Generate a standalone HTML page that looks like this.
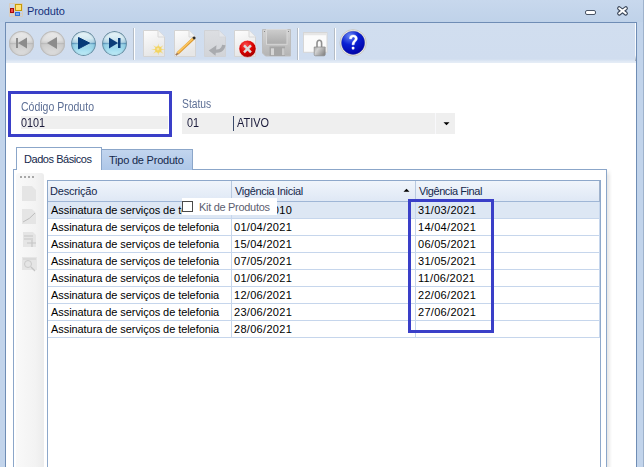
<!DOCTYPE html>
<html><head><meta charset="utf-8">
<style>
*{margin:0;padding:0;box-sizing:border-box}
html,body{width:644px;height:467px;overflow:hidden}
body{position:relative;background:#c2d4eb;font-family:"Liberation Sans",sans-serif;font-size:11px;line-height:13px;color:#000}
.a{position:absolute}
.t{position:absolute;white-space:nowrap;font-size:11px;line-height:15px}
#title{left:0;top:0;width:644px;height:22px;background:linear-gradient(#c8d8ed,#bfd2e9)}
#frame{left:5px;top:22px;width:632px;height:460px;border:1px solid #6f8db5;border-bottom:none;background:#fff}
#tb{left:6px;top:23px;width:630px;height:40px;background:linear-gradient(#d1deef 0,#d0ddef 36px,#e4ecf6 39px)}
.nav{position:absolute;top:31px;width:25px;height:25px;border-radius:50%}
.gray{background:linear-gradient(#eeeeee 0%,#dedede 38%,#cfcfcf 47%,#bdbdbd 50%,#cdcdcd 55%,#d8d8d8 80%,#e2e2e2 100%);box-shadow:inset 0 0 0 1px #bcbcbc,inset 0 0 3px 1px rgba(150,150,150,.35)}
.blue{background:radial-gradient(ellipse 55% 22% at 50% 50%,rgba(230,245,250,.55),rgba(230,245,250,0)),linear-gradient(#edf7fa 0%,#d4eaf2 30%,#a6cde0 45%,#4a8db5 50%,#86c9e2 55%,#a6def0 75%,#c4eff9 100%);box-shadow:inset 0 0 0 1px #6b8ea3,inset 0 0 2px 1px rgba(60,110,140,.35)}
.sep{position:absolute;top:28px;width:2px;height:32px;background:linear-gradient(90deg,#b4bcc6 50%,#fff 50%)}
.lbl{color:#5d6f95}
.box{position:absolute;border:3px solid #3a3fc8}
.gl{position:absolute;background:#c6d6ec}
</style></head><body>
<div id="title" class="a"></div>
<!-- title icon -->
<svg class="a" style="left:9px;top:3px" width="14" height="14" viewBox="0 0 14 14">
<path d="M0.5 0.5 H13.5 V13.5 H0.5Z M0.5 5.5 H5.5 M5.5 0.5 V13.5 M0.5 10.5 H13.5 M3 10.5 V13.5 M11 10.5 V13.5" fill="none" stroke="#d9cdbd" stroke-width="1"/>
<rect x="6" y="1" width="7" height="7" fill="#c49a08"/><rect x="7" y="2" width="5" height="5" fill="#ffe27a"/>
<rect x="1" y="5" width="4" height="5" fill="#a80c0c"/><rect x="2" y="6" width="2" height="3" fill="#f04848"/>
<rect x="6" y="9" width="5" height="4" fill="#2f6fd8"/><rect x="7" y="10" width="3" height="2" fill="#78aaf0"/>
</svg>
<div class="t" style="left:27px;top:4px;color:#15307a;letter-spacing:-0.1px">Produto</div>
<!-- min / close -->
<div class="a" style="left:585px;top:10px;width:11px;height:5px;border:1px solid #4a5566;border-radius:2px;background:#fff"></div>
<svg class="a" style="left:615px;top:4px" width="15" height="13" viewBox="0 0 15 13">
<path d="M4.2 4.3 L10.8 9.5 M10.8 4.3 L4.2 9.5" stroke="#3e4a5c" stroke-width="4.2" stroke-linecap="round"/>
<path d="M4.2 4.3 L10.8 9.5 M10.8 4.3 L4.2 9.5" stroke="#fff" stroke-width="2" stroke-linecap="round"/>
</svg>
<div id="frame" class="a"></div>
<div id="tb" class="a"></div>
<div class="a" style="left:635px;top:23px;width:1px;height:38px;background:linear-gradient(#fff 0,#f4f7fb 85%,#a0a8b4 100%)"></div>
<div class="a" style="left:643px;top:0;width:1px;height:467px;background:#9eb2cc"></div>
<!-- nav buttons -->
<div class="nav gray" style="left:9px"></div>
<div class="nav gray" style="left:40px"></div>
<div class="nav blue" style="left:71px"></div>
<div class="nav blue" style="left:102px"></div>
<svg class="a" style="left:10px;top:31px" width="24" height="24"><rect x="6" y="7" width="2" height="10" fill="#8c8c8c"/><path d="M8 12 L17 6.5 L17 17.5Z" fill="#8c8c8c"/></svg>
<svg class="a" style="left:41px;top:31px" width="24" height="24"><path d="M6 12 L16 6 L16 18Z" fill="#8c8c8c"/></svg>
<svg class="a" style="left:72px;top:31px" width="24" height="24"><path d="M6.5 6.5 L17.5 12 L6.5 17.8Z" fill="#063a78" stroke="#063a78" stroke-width="1" stroke-linejoin="round"/></svg>
<svg class="a" style="left:103px;top:31px" width="24" height="24"><path d="M6 6.5 L15 12 L6 17.5Z" fill="#0b3d78"/><rect x="15" y="7" width="2.5" height="10" fill="#0b3d78"/></svg>
<div class="sep" style="left:133px"></div>
<div class="sep" style="left:297px"></div>
<div class="sep" style="left:334px"></div>
<!-- toolbar icons -->
<svg class="a" style="left:140px;top:27px" width="240" height="32" viewBox="140 27 240 32">
<defs>
<linearGradient id="pg" x1="0" y1="0" x2="0.3" y2="1"><stop offset="0" stop-color="#fdfdfd"/><stop offset="1" stop-color="#e6e6e6"/></linearGradient>
<linearGradient id="pgd" x1="0" y1="0" x2="0" y2="1"><stop offset="0" stop-color="#dcdee2"/><stop offset="1" stop-color="#d2d4d8"/></linearGradient>
<radialGradient id="redg" cx="0.4" cy="0.3" r="0.7"><stop offset="0" stop-color="#ff5050"/><stop offset="0.6" stop-color="#d80000"/><stop offset="1" stop-color="#a00000"/></radialGradient>
<radialGradient id="blug" cx="0.35" cy="0.2" r="0.85"><stop offset="0" stop-color="#6a88f4"/><stop offset="0.45" stop-color="#0a20d4"/><stop offset="1" stop-color="#0000a4"/></radialGradient>
<linearGradient id="flop" x1="0" y1="0" x2="0" y2="1"><stop offset="0" stop-color="#bdbdbd"/><stop offset="1" stop-color="#9c9c9c"/></linearGradient>
<linearGradient id="lockg" x1="0" y1="0" x2="1" y2="0.6"><stop offset="0" stop-color="#a8a8a8"/><stop offset="0.35" stop-color="#d2d2d2"/><stop offset="1" stop-color="#8c8c8c"/></linearGradient>
</defs>
<!-- new -->
<path d="M143.5 30.5 H158 L164.5 37 V56.5 H143.5Z" fill="url(#pg)" stroke="#d4d4d4"/>
<path d="M158 30.5 V37 H164.5" fill="#f2f2f2" stroke="#d8d8d8"/>
<polygon points="158.30,43.38 159.29,47.46 163.39,45.17 160.70,48.65 165.50,49.50 160.70,50.35 163.39,53.83 159.29,51.54 158.30,55.62 157.31,51.54 153.21,53.83 155.90,50.35 151.10,49.50 155.90,48.65 153.21,45.17 157.31,47.46" fill="#f4d870" opacity="0.85"/><circle cx="158.3" cy="49.5" r="3.2" fill="#f2d35c" opacity="0.9"/><circle cx="157.9" cy="49.1" r="1.4" fill="#f7e3a0"/>
<!-- edit -->
<path d="M174.5 30.5 H189 L195.5 37 V56.5 H174.5Z" fill="url(#pg)" stroke="#d4d4d4"/>
<path d="M189 30.5 V37 H195.5" fill="#f2f2f2" stroke="#d8d8d8"/>
<path d="M177.5 53.5 L193.5 38.5" stroke="#dc9a34" stroke-width="3"/>
<path d="M177.3 53.1 L193.2 38.2" stroke="#fcc660" stroke-width="1.5"/>
<path d="M193.2 38.8 L195 37.1" stroke="#2a2a2a" stroke-width="2.6"/>
<path d="M175.8 55.2 L177.8 53.3" stroke="#a0785a" stroke-width="1.8"/>
<!-- undo (disabled) -->
<path d="M204.5 30.5 H219 L225.5 37 V56.5 H204.5Z" fill="url(#pgd)" stroke="#d0d2d6"/>
<path d="M219 30.5 V37 H225.5" fill="#e4e6ea" stroke="#d6d8dc"/>
<path d="M223.8 45 C223.2 50 219 51.8 214.5 50.8" fill="none" stroke="#a9abaf" stroke-width="3.4"/><path d="M216.5 45.2 L208.8 50.6 L215.5 55.8Z" fill="#a9abaf"/>
<!-- delete -->
<path d="M234.5 30.5 H249 L255.5 37 V56.5 H234.5Z" fill="url(#pg)" stroke="#d4d4d4"/>
<path d="M249 30.5 V37 H255.5" fill="#f2f2f2" stroke="#d8d8d8"/>
<circle cx="247.5" cy="48.8" r="8.6" fill="url(#redg)" stroke="#fff" stroke-width="0.6"/>
<path d="M244 45.3 L251 52.3 M251 45.3 L244 52.3" stroke="#dcdcdc" stroke-width="2.4"/>
<!-- save (disabled) -->
<linearGradient id="flop2" x1="0" y1="0" x2="0" y2="1"><stop offset="0" stop-color="#d4d4d4"/><stop offset="1" stop-color="#b4b4b4"/></linearGradient>
<linearGradient id="flab" x1="0" y1="0" x2="0" y2="1"><stop offset="0" stop-color="#cdcdcd"/><stop offset="1" stop-color="#ababab"/></linearGradient>
<path d="M262.5 29.5 H290.5 V56 H265.5 L262.5 53Z" fill="url(#flop2)" stroke="#bdbdbd"/>
<rect x="266.5" y="29.5" width="20.5" height="14.8" fill="url(#flab)" stroke="#d8d8d8"/>
<rect x="269.5" y="46.5" width="15.5" height="9.5" fill="#a6a6a6"/>
<rect x="271" y="48.3" width="3" height="6.8" fill="#d6d6d6"/>
<rect x="282" y="48.3" width="2.6" height="6.8" fill="#cacaca"/>
<rect x="264" y="31" width="1" height="1" fill="#888"/><rect x="288" y="31" width="1" height="1" fill="#888"/>
<!-- lock -->
<rect x="303.5" y="32.5" width="23.5" height="19.8" fill="#fbfbfb" stroke="#d6d6d6"/>
<rect x="304" y="33" width="22.5" height="2.2" fill="#e6e6e6"/>
<path d="M317 47 V43 A2.3 2.8 0 0 1 321.6 43 V47" fill="none" stroke="#909090" stroke-width="1.6"/>
<path d="M314.2 47 H325.2 V54.5 Q325.2 55.8 324 55.8 H315.4 Q314.2 55.8 314.2 54.5Z" fill="url(#lockg)" stroke="#888" stroke-width="0.7"/>
<!-- help -->
<circle cx="353.1" cy="42.8" r="13.2" fill="#eeede6" stroke="#bdbcb4" stroke-width="0.7"/>
<circle cx="353.1" cy="42.8" r="11.6" fill="url(#blug)" stroke="#2a3aa0" stroke-width="0.4"/>
<path d="M349.5 38.7 C349.5 35.8 351.3 35 353.3 35 C355.6 35 357.3 36.4 357.3 38.5 C357.3 41.2 354.4 41.5 354.2 44.8 H352 C352 41 355 40.6 355 38.6 C355 37.5 354.3 36.9 353.3 36.9 C352.2 36.9 351.6 37.6 351.6 38.9Z" fill="#fff" stroke="#fff" stroke-width="0.5"/>
<rect x="351.8" y="46.8" width="2.6" height="2.8" rx="0.8" fill="#fff"/>
</svg>
<!-- form -->
<div class="box" style="left:8px;top:91px;width:164px;height:46px"></div>
<div class="t lbl" style="left:21px;top:100px;font-size:12px;transform:scaleX(0.875);transform-origin:0 0">Código Produto</div>
<div class="a" style="left:21px;top:116px;width:147px;height:13px;background:#efefef"></div>
<div class="t" style="left:21px;top:116px;color:#1a1a3a;font-size:12px;transform:scaleX(0.9);transform-origin:0 0">0101</div>
<div class="t lbl" style="left:182px;top:97px;font-size:12px;transform:scaleX(0.86);transform-origin:0 0">Status</div>
<div class="a" style="left:182px;top:113px;width:273px;height:21px;background:#efefef"></div>
<div class="a" style="left:435px;top:113px;width:1px;height:21px;background:#f8f8fb"></div>
<div class="t" style="left:187px;top:116px;color:#1a1a3a;font-size:12px;transform:scaleX(0.9);transform-origin:0 0">01</div>
<div class="a" style="left:233px;top:116px;width:1px;height:15px;background:#3a4a6a"></div>
<div class="t" style="left:237px;top:116px;color:#1a1a3a;font-size:12px;transform:scaleX(0.91);transform-origin:0 0">ATIVO</div>
<svg class="a" style="left:443px;top:122px" width="8" height="5"><path d="M0.5 0.3 H6.5 L3.5 3.3Z" fill="#000"/></svg>
<!-- tabs -->
<div class="a" style="left:13px;top:169px;width:594px;height:300px;border:1px solid #8ba6c9;border-bottom:none;background:#fff"></div>
<div class="a" style="left:607px;top:169px;width:5px;height:300px;background:linear-gradient(90deg,rgba(0,0,0,.10),rgba(0,0,0,0));-webkit-mask-image:linear-gradient(transparent,#000 7px)"></div>
<div class="a" style="left:101px;top:149px;width:92px;height:21px;border:1px solid #8ba6c9;border-bottom:none;background:linear-gradient(#c2d5ee,#aec7e8)"></div>
<div class="t" style="left:109px;top:153px;color:#15284b;letter-spacing:-0.22px">Tipo de Produto</div>
<div class="a" style="left:16px;top:147px;width:86px;height:23px;border:1px solid #8ba6c9;border-bottom:none;background:#fff"></div>
<div class="t" style="left:24px;top:152px;color:#15284b;letter-spacing:-0.45px">Dados Básicos</div>
<!-- vertical toolstrip -->
<div class="a" style="left:16px;top:173px;width:28px;height:300px;border-radius:3px 3px 0 0;background:linear-gradient(90deg,#f9f9f9,#f3f3f3 70%,#ececec)"></div>
<svg class="a" style="left:16px;top:173px" width="28" height="100" viewBox="16 173 28 100">
<g fill="#a8a8a8"><rect x="20" y="176" width="2" height="2"/><rect x="24" y="176" width="2" height="2"/><rect x="28" y="176" width="2" height="2"/><rect x="32" y="176" width="2" height="2"/></g>
<path d="M22 186 H32 L36 190 V201 H22Z" fill="#e5e5e5"/>
<path d="M22 209 H32 L36 213 V224 H22Z" fill="#e5e5e5"/>
<path d="M23 222 Q30 219 35 213" fill="none" stroke="#bdbdbd" stroke-width="1"/>
<path d="M23 232 H33 L36 235 V247 H23Z" fill="#e5e5e5"/>
<path d="M24 236 H33 M24 239 H33 M27 243 H36 M32 240 V247" stroke="#c6c6c6" stroke-width="1.2"/>
<rect x="22" y="257" width="15" height="13" fill="#e5e5e5"/>
<path d="M23 259 H36" stroke="#cfcfcf"/>
<circle cx="28" cy="264" r="3.5" fill="none" stroke="#cacaca"/>
<path d="M31 267 L35 271" stroke="#c4c4c4" stroke-width="1.2"/>
</svg>
<!-- grid -->
<div class="a" style="left:47px;top:180px;width:554px;height:300px;border:1px solid #8ea8ca;border-bottom:none;background:#fff"></div>
<div class="a" style="left:48px;top:181px;width:551px;height:20px;background:linear-gradient(#f0f5fb,#dfe8f5)"></div>
<div class="a" style="left:48px;top:201px;width:552px;height:1px;background:#9fb6d6"></div>
<div class="a" style="left:599px;top:181px;width:1px;height:21px;background:#9fb2cc"></div>
<div class="a" style="left:48px;top:202px;width:551px;height:16px;background:#dde7f4"></div>
<div class="a" style="left:231px;top:181px;width:1px;height:20px;background:#b8c9e0"></div>
<div class="a" style="left:415px;top:181px;width:1px;height:20px;background:#b8c9e0"></div>
<div class="gl" style="left:231px;top:202px;width:1px;height:136px"></div>
<div class="gl" style="left:415px;top:202px;width:1px;height:136px"></div>
<div class="gl" style="left:599px;top:202px;width:1px;height:136px"></div>
<div class="gl" style="left:48px;top:218px;width:551px;height:1px"></div>
<div class="gl" style="left:48px;top:235px;width:551px;height:1px"></div>
<div class="gl" style="left:48px;top:252px;width:551px;height:1px"></div>
<div class="gl" style="left:48px;top:269px;width:551px;height:1px"></div>
<div class="gl" style="left:48px;top:286px;width:551px;height:1px"></div>
<div class="gl" style="left:48px;top:303px;width:551px;height:1px"></div>
<div class="gl" style="left:48px;top:320px;width:551px;height:1px"></div>
<div class="gl" style="left:48px;top:337px;width:551px;height:1px"></div>
<div class="t" style="left:50px;top:184px;color:#15284b;letter-spacing:-0.2px">Descrição</div>
<div class="t" style="left:235px;top:184px;color:#15284b;letter-spacing:-0.33px">Vigência Inicial</div>
<div class="t" style="left:419px;top:184px;color:#15284b;letter-spacing:-0.42px">Vigência Final</div>
<svg class="a" style="left:403px;top:188px" width="8" height="5"><path d="M0.5 3.8 H6.5 L3.5 0.8Z" fill="#000"/></svg>
<div class="t" style="left:51px;top:203px;letter-spacing:-0.07px">Assinatura de serviços de telefonia</div>
<div class="t" style="left:234px;top:203px;letter-spacing:0.3px">01/01/2010</div>
<div class="t" style="left:418px;top:203px;letter-spacing:0.3px">31/03/2021</div>
<div class="t" style="left:51px;top:220px;letter-spacing:-0.07px">Assinatura de serviços de telefonia</div>
<div class="t" style="left:234px;top:220px;letter-spacing:0.3px">01/04/2021</div>
<div class="t" style="left:418px;top:220px;letter-spacing:0.3px">14/04/2021</div>
<div class="t" style="left:51px;top:237px;letter-spacing:-0.07px">Assinatura de serviços de telefonia</div>
<div class="t" style="left:234px;top:237px;letter-spacing:0.3px">15/04/2021</div>
<div class="t" style="left:418px;top:237px;letter-spacing:0.3px">06/05/2021</div>
<div class="t" style="left:51px;top:254px;letter-spacing:-0.07px">Assinatura de serviços de telefonia</div>
<div class="t" style="left:234px;top:254px;letter-spacing:0.3px">07/05/2021</div>
<div class="t" style="left:418px;top:254px;letter-spacing:0.3px">31/05/2021</div>
<div class="t" style="left:51px;top:271px;letter-spacing:-0.07px">Assinatura de serviços de telefonia</div>
<div class="t" style="left:234px;top:271px;letter-spacing:0.3px">01/06/2021</div>
<div class="t" style="left:418px;top:271px;letter-spacing:0.3px">11/06/2021</div>
<div class="t" style="left:51px;top:288px;letter-spacing:-0.07px">Assinatura de serviços de telefonia</div>
<div class="t" style="left:234px;top:288px;letter-spacing:0.3px">12/06/2021</div>
<div class="t" style="left:418px;top:288px;letter-spacing:0.3px">22/06/2021</div>
<div class="t" style="left:51px;top:305px;letter-spacing:-0.07px">Assinatura de serviços de telefonia</div>
<div class="t" style="left:234px;top:305px;letter-spacing:0.3px">23/06/2021</div>
<div class="t" style="left:418px;top:305px;letter-spacing:0.3px">27/06/2021</div>
<div class="t" style="left:51px;top:322px;letter-spacing:-0.07px">Assinatura de serviços de telefonia</div>
<div class="t" style="left:234px;top:322px;letter-spacing:0.3px">28/06/2021</div>
<!-- overlay checkbox -->
<div class="a" style="left:182px;top:198px;width:95px;height:17px;background:#fff"></div>
<div class="a" style="left:182px;top:201px;width:11px;height:11px;border:1px solid #4a4a4a;background:#fff"></div>
<div class="t" style="left:199px;top:200px;color:#5c6070;letter-spacing:-0.3px">Kit de Produtos</div>
<div class="box" style="left:408px;top:199px;width:86px;height:134px"></div>
</body></html>
